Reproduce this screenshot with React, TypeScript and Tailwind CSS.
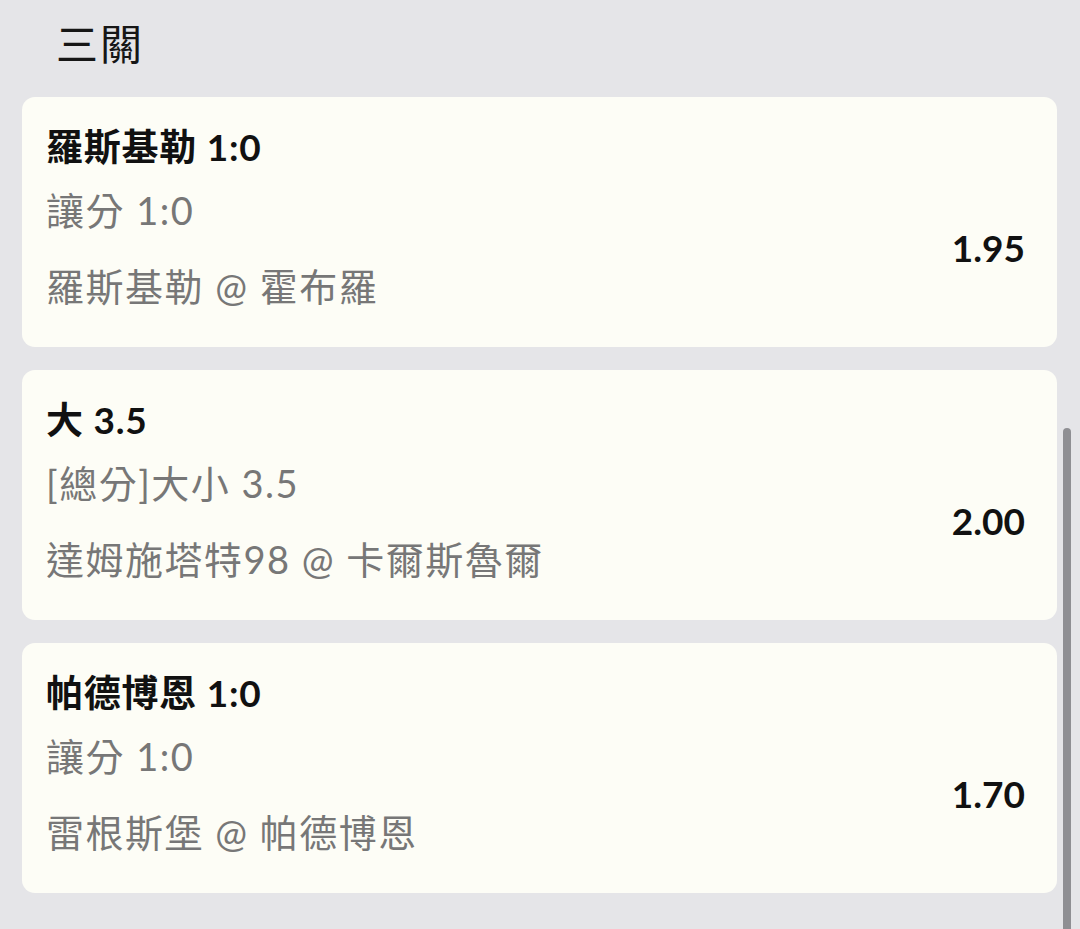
import React from "react";

type Bet = { title: string; market: string; match: string; odds: string };

const bets: Bet[] = [
  { title: "羅斯基勒 1:0", market: "讓分 1:0", match: "羅斯基勒 @ 霍布羅", odds: "1.95" },
  { title: "大 3.5", market: "[總分]大小 3.5", match: "達姆施塔特98 @ 卡爾斯魯爾", odds: "2.00" },
  { title: "帕德博恩 1:0", market: "讓分 1:0", match: "雷根斯堡 @ 帕德博恩", odds: "1.70" },
];

const font = { fontFamily: 'Lato, "Noto Sans CJK TC", "Noto Sans", sans-serif' };

export default function App() {
  return (
    <div className="relative w-[1080px] h-[929px] overflow-hidden bg-[#e5e5e8]" style={font}>
      <div className="pl-[56px] pt-[20px] h-[97px]">
        <div className="text-[42px] leading-[48px] tracking-[2px] text-[#161616]">三關</div>
      </div>
      <div className="flex flex-col gap-[23px] pl-[22px] pr-[23px]">
        {bets.map((b, i) => (
          <div key={i} className="h-[250px] rounded-[13px] bg-[#fdfdf6] pl-[24px] pr-[32px] pt-[25px]">
            <div className="h-[50px] flex items-center text-[37px] tracking-[0.75px] font-bold text-[#111111]">{b.title}</div>
            <div className="flex items-center">
              <div className="flex-1 text-[38px] tracking-[1.5px] text-[#777777]">
                <div className="h-[76px] flex items-center">{b.market}</div>
                <div className="h-[76px] flex items-center">{b.match}</div>
              </div>
              <div className="text-[37px] font-bold text-[#111111]">{b.odds}</div>
            </div>
          </div>
        ))}
      </div>
      <div className="absolute left-[1063px] top-[428px] w-[8px] h-[520px] rounded-t-full bg-[#8f8f93]" />
    </div>
  );
}
